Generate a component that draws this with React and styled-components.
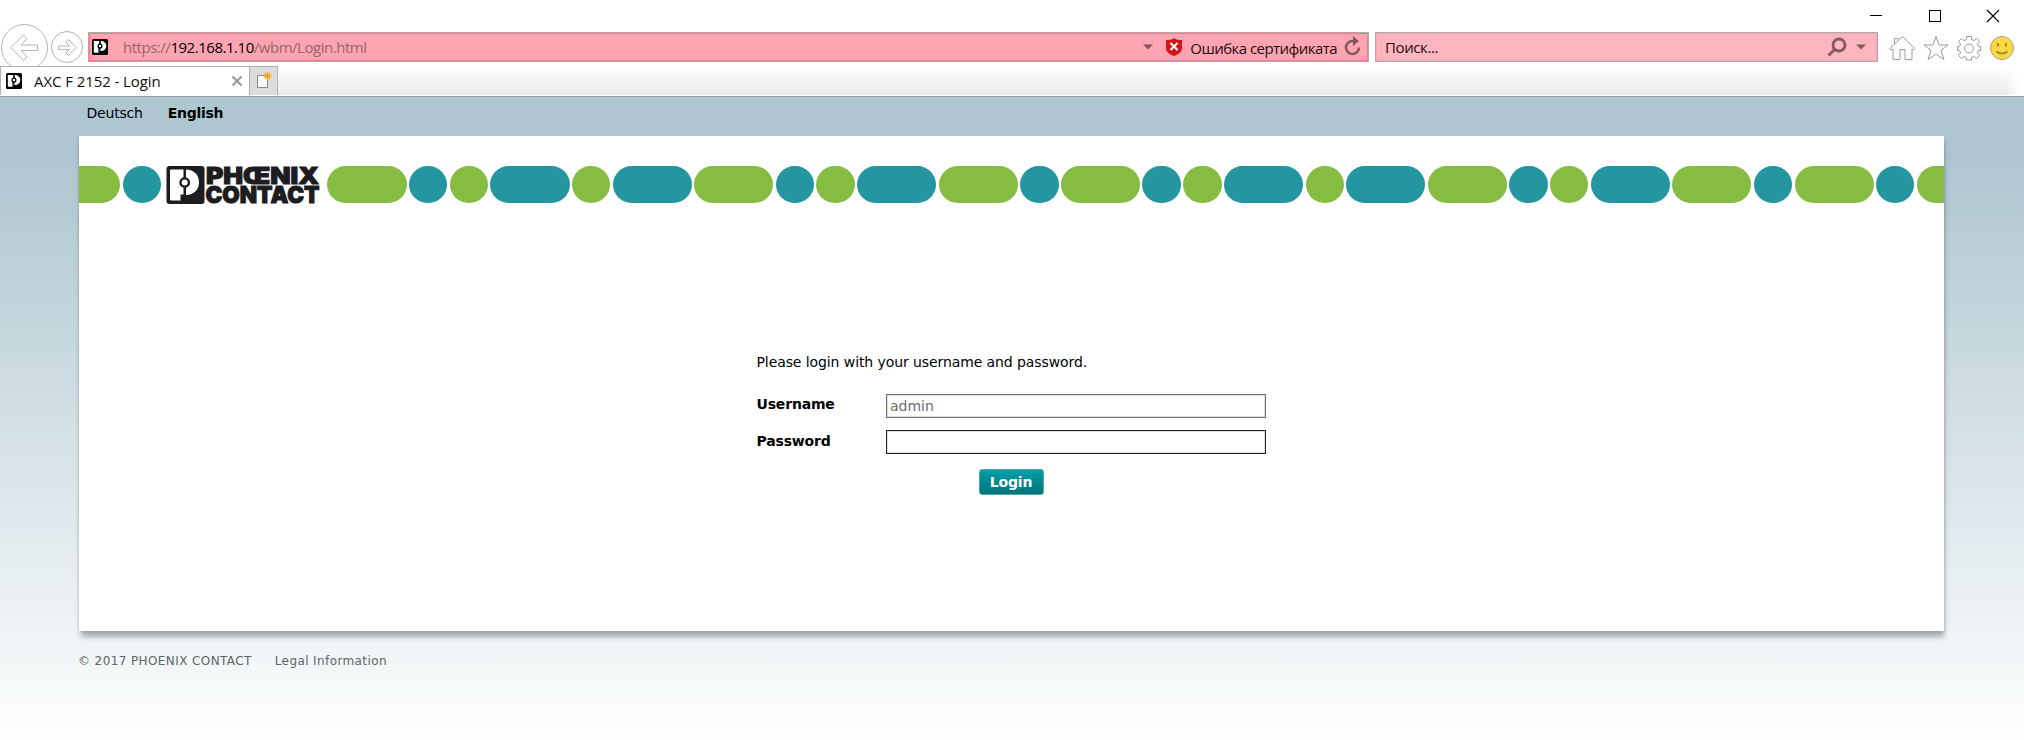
import React from "react";
import styled, { createGlobalStyle } from "styled-components";

const Global = createGlobalStyle`
  * { box-sizing: border-box; }
  body { margin: 0; background: #fff; overflow: hidden; }
`;
const uiFont = `"Open Sans", "Noto Sans", sans-serif`;
const pageFont = `"DejaVu Sans", "Liberation Sans", sans-serif`;

const Screen = styled.div`
  width: 2024px; height: 740px; display: flex; flex-direction: column;
`;
const TitleBar = styled.div`
  height: 32px; display: flex; justify-content: flex-end; align-items: flex-start;
  padding: 9px 24px 0 0; gap: 44.5px;
`;
const NavBar = styled.div`
  height: 34px; display: flex; align-items: flex-start;
`;
const NavButtons = styled.div`
  width: 88px; height: 34px; flex: none; display: flex; margin-top: -8px;
  svg { display: block; }
`;
const AddressBar = styled.div`
  width: 1281px; height: 30px; flex: none; display: flex; align-items: center;
  background: #ffa5b1; border: 1px solid #b0a8aa; box-shadow: inset 0 0 0 1px #ff7685;
  padding-left: 3px;
`;
const Url = styled.div`
  margin-left: 15px; flex: 1; font: 15px/20px ${uiFont}; color: #92666c;
  letter-spacing: -0.47px; white-space: nowrap;
  b { font-weight: 400; color: #000; }
`;
const CertText = styled.div`
  font: 15px/20px ${uiFont}; color: #1c0c0e; margin: 1px 7px 0 8px; white-space: nowrap;
  letter-spacing: -0.55px;
`;
const SearchBar = styled.div`
  width: 503px; height: 30px; flex: none; display: flex; align-items: center; margin-left: 6px;
  background: #ffb5c0; border: 1px solid #b0a8aa; box-shadow: inset 0 0 0 1px #ffa5b1;
  padding: 0 11px 0 9px; font: 15px/20px ${uiFont}; color: #1c0c0e; letter-spacing: -0.4px;
  span { flex: 1; }
`;
const Tools = styled.div`
  display: flex; gap: 7px; margin: 3px 0 0 11px;
  svg { display: block; }
`;
const TabStrip = styled.div`
  height: 31px; flex: none; display: flex; align-items: flex-start;
  border-bottom: 1px solid #9b9fa1;
`;
const StripShade = styled.div`
  flex: 1; height: 29px; margin-right: 3px;
  background: linear-gradient(#fff, #ebebeb);
  mask-image: linear-gradient(to right, #000 calc(100% - 16px), transparent);
`;
const Tab = styled.div`
  width: 250px; height: 29px; background: #fff; border: 1px solid #b0b0b0; border-bottom: 0;
  display: flex; align-items: center; padding: 0 6px 0 5px;
  font: 15px/20px ${uiFont}; color: #111; letter-spacing: -0.08px;
  span { flex: 1; margin-left: 12px; }
`;
const NewTab = styled.div`
  width: 28px; height: 29px; background: #dcdcdc; border: 1px solid #b0b0b0; border-left: 0; border-bottom: 0;
  display: flex; justify-content: center; padding-top: 5px;
`;
const Page = styled.div`
  flex: 1; padding: 0 80px 0 79px;
  background: linear-gradient(#aec6d0 0, #aec6d0 60px, #fcfdfd 635px);
  font-family: ${pageFont};
`;
const Languages = styled.div`
  height: 39px; padding: 7px 0 0 7.5px; display: flex; gap: 25px; font-size: 14px; line-height: 18px; color: #000;
`;
const Lang = styled.span`
  font-weight: ${(p) => (p.$active ? 700 : 400)};
  letter-spacing: ${(p) => (p.$active ? "-0.3px" : "-0.2px")};
`;
const Panel = styled.div`
  height: 495px; background: #fff; padding-top: 30px;
  box-shadow: 1px 7px 5px -1px rgba(85, 92, 97, 0.45), 0 0 3px rgba(80, 100, 110, 0.3);
  clip-path: inset(0 -6px -12px -4px);
`;
const Band = styled.div`
  height: 38px; display: flex; overflow: hidden;
`;
const Bead = styled.i`
  flex: none; height: 37px; border-radius: 18.5px; margin-right: 2.4px;
  width: ${(p) => (p.$long ? 79.14 : 38.37)}px;
  background: ${(p) => (p.$teal ? "#2396a0" : "#87bc42")};
  margin-left: ${(p) => p.$offset || 0}px;
`;
const LogoSvg = styled.svg`
  flex: none; display: block; margin: 0 6px 0 3px; overflow: visible;
`;
const Form = styled.div`
  width: 510px; margin: 149px 0 0 677.5px; font-size: 14px; line-height: 18px; color: #000;
`;
const Hint = styled.div`
  letter-spacing: -0.09px; white-space: nowrap; margin-bottom: 23px;
`;
const Field = styled.label`
  display: flex; height: 24px; margin-bottom: 12px;
`;
const FieldName = styled.b`
  width: 129.5px; letter-spacing: -0.18px; padding-top: ${(p) => p.$drop}px;
`;
const Input = styled.div`
  width: 380px; height: 24px; background: #fff; padding: 2px 3px; color: #6d6d6d;
  border: 1px solid ${(p) => (p.$dark ? "#222" : "#6f6f72")};
  box-shadow: inset 0 0 0 1px #dedede;
`;
const Login = styled.button`
  display: block; width: 65px; height: 26px; margin: 15px 0 0 222px; padding: 0; border: 1px solid #4fa9ae;
  border-radius: 3px; background: linear-gradient(#009fa8, #00747a); color: #fff;
  font: 700 14px/18px ${pageFont}; letter-spacing: -0.2px;
`;
const Footer = styled.div`
  margin: 21px 0 0 -1px; display: flex; gap: 23px; font-size: 12px; line-height: 18px; color: #5f6467;
  letter-spacing: 0.4px;
`;

const Fav = () => (
  <svg width="16" height="16" viewBox="0 0 16 16">
    <rect width="16" height="16" rx="1.5" fill="#000" />
    <path d="M1.800 2H7.500V13.800H2.500Q1.800 13.800 1.800 13z" fill="#fff" />
    <path d="M8.500 2C12 2 14.300 4 14.300 7S12 12 8.500 12z" fill="#fff" />
    <path d="M8 2v5M7 9v6" stroke="#000" strokeWidth="1.200" />
    <circle cx="8" cy="7" r="1.900" fill="#fff" stroke="#000" strokeWidth="1.300" />
  </svg>
);

const Logo = () => (
  <LogoSvg width="155" height="39" viewBox="0 0 155 39">
    <rect x="0.500" y="0" width="38" height="38" rx="3" fill="#1d1c20" />
    <path d="M5 3.500H17.500V28.500H14.500V34.500H5.500Q4 34.500 4 33V4.500Q4 3.500 5 3.500z" fill="#fff" />
    <path d="M20 3.500C28 3.500 33 9 33 16.300S28 29 20 29z" fill="#fff" />
    <circle cx="18.700" cy="16.500" r="4.200" fill="#fff" stroke="#1d1c20" strokeWidth="2.400" />
    <g fill="#1d1c20" stroke="#1d1c20" strokeWidth="1" fontFamily="Inter, 'Open Sans', sans-serif" fontWeight="900" fontSize="23">
      <text x="40" y="17.500" textLength="113" lengthAdjust="spacingAndGlyphs">PHŒNIX</text>
      <text x="39.500" y="37.300" textLength="114" lengthAdjust="spacingAndGlyphs">CONTACT</text>
    </g>
  </LogoSvg>
);

const Caret = () => (
  <svg width="10" height="6" viewBox="0 0 10 6"><path d="M0 .5h10L5 5.500z" fill="#85585e" /></svg>
);

const ShieldSvg = styled.svg`
  margin-left: 13px;
`;
const ReloadSvg = styled.svg`
  margin: -2px 7px 0 0;
`;
const SearchSvg = styled.svg`
  margin-right: 9px;
`;

// Upper case is a long bead, lower case a round one; g is green, t is teal.
const beads = "GtgTgTGtgTGtGtgTgTGtgTGtGtG".split("");

export default function App() {
  return (
    <Screen>
      <Global />
      <TitleBar>
        <svg width="14" height="14"><path d="M1 6.500h12" stroke="#000" /></svg>
        <svg width="14" height="14"><rect x="1.500" y="1.500" width="11" height="11" fill="none" stroke="#000" /></svg>
        <svg width="14" height="14"><path d="M1 1l12 12M13 1L1 13" stroke="#000" strokeWidth="1.100" /></svg>
      </TitleBar>
      <NavBar>
        <NavButtons>
          <svg width="88" height="42" viewBox="0 0 88 42" fill="none" stroke="#b3b3b3">
            <circle cx="24.500" cy="23.500" r="23" />
            <circle cx="67" cy="23" r="15.500" />
            <path d="M11 23.500L23.500 11l3.500 3.500-6 6.500H37.500v5.500H21l6 6.500-3.500 3.500z" />
            <path d="M76 23.500L68.500 15.500l-2.500 2.500 3.500 4H58.500v3.500h11L66 29l2.500 2.500z" />
          </svg>
        </NavButtons>
        <AddressBar>
          <Fav />
          <Url>https://<b>192.168.1.10</b>/wbm/Login.html</Url>
          <Caret />
          <ShieldSvg width="16" height="18" viewBox="0 0 16 18">
            <path d="M8 0c2 1.700 4.500 2.200 8 2v8.500c0 3.500-4 6-8 7.500-4-1.500-8-4-8-7.500V2c3.500.2 6-.3 8-2z" fill="#d3161b" />
            <path d="M4.500 5l7 7M11.500 5l-7 7" stroke="#fff" strokeWidth="2" />
          </ShieldSvg>
          <CertText>Ошибка сертификата</CertText>
          <ReloadSvg width="17" height="20" viewBox="0 0 17 20">
            <path d="M10.500 5H8.500a6.500 6.500 0 1 0 6.500 6.500" fill="none" stroke="#85585e" strokeWidth="2.600" />
            <path d="M9 0l6 5-6 5z" fill="#85585e" />
          </ReloadSvg>
        </AddressBar>
        <SearchBar>
          <span>Поиск...</span>
          <SearchSvg width="20" height="20" viewBox="0 0 20 20">
            <circle cx="12" cy="8" r="6" fill="none" stroke="#85585e" strokeWidth="2.800" />
            <path d="M8 12l-6.500 6.500" stroke="#85585e" strokeWidth="2.800" />
          </SearchSvg>
          <Caret />
        </SearchBar>
        <Tools>
          <svg width="27" height="26" viewBox="0 0 27 26" fill="none" stroke="#9c9c9c"><path d="M1 13.500L13.500 1.500 26 13.500l-1.500 1.500-1.500-1V24.500h-7V14.500h-5v10h-7V14l-2 1zM5.500 9V3.500h3.500V5.500" /></svg>
          <svg width="26" height="26" viewBox="0 0 26 26" fill="none" stroke="#9c9c9c"><path d="M13 1.500l3 8.500h9l-7 5.500 3 9-8-5.500-8 5.500 3-9L1 10h9z" /></svg>
          <svg width="26" height="26" viewBox="0 0 26 26" fill="none" stroke="#9c9c9c"><path d="M10.500 1.500h5v3l2.500 1 2.500-2 3 3-2 2.500 1 2.500h2v4h-2l-1 2.500 2 2.500-3 3-2.500-2-2.500 1v2.500h-5V22.500L8 21.500l-2.500 2-3-3 2-2.500-1-2.500h-2v-4h2l1-2.500-2-2.500 3-3 2.500 2 2.500-1z" /><circle cx="13" cy="13.500" r="4.500" /></svg>
          <svg width="26" height="26" viewBox="0 0 26 26"><circle cx="13" cy="13" r="11.500" fill="#ffd83f" stroke="#a39f92" /><path d="M9 8v3.500M17 8v3.500M7.500 16.500q5.500 4 11 0" fill="none" stroke="#94833a" strokeWidth="1.700" /></svg>
        </Tools>
      </NavBar>
      <TabStrip>
        <Tab><Fav /><span>AXC F 2152 - Login</span>
          <svg width="12" height="12"><path d="M1.500 1.500l9 9M10.500 1.500l-9 9" stroke="#999" strokeWidth="2" /></svg>
        </Tab>
        <NewTab>
          <svg width="16" height="18" viewBox="0 0 16 18"><rect x="1.500" y="3.500" width="10" height="12" fill="#fafafa" stroke="#8b8b8b" /><path d="M11.500 0v8M7.500 4h8M8.700 1.200l5.600 5.600M14.300 1.200L8.700 6.800" stroke="#f2a516" strokeWidth="1.300" /></svg>
        </NewTab>
        <StripShade />
      </TabStrip>
      <Page>
        <Languages><Lang>Deutsch</Lang><Lang $active>English</Lang></Languages>
        <Panel>
          <Band>
            <Bead $long $offset={-37.9} />
            <Bead $teal />
            <Logo />
            {beads.map((b, i) => (
              <Bead key={i} $long={b === "T" || b === "G"} $teal={b.toLowerCase() === "t"} />
            ))}
          </Band>
          <Form>
            <Hint>Please login with your username and password.</Hint>
            <Field><FieldName $drop={1}>Username</FieldName><Input>admin</Input></Field>
            <Field><FieldName $drop={2}>Password</FieldName><Input $dark /></Field>
            <Login>Login</Login>
          </Form>
        </Panel>
        <Footer><span>© 2017 PHOENIX CONTACT</span><span>Legal Information</span></Footer>
      </Page>
    </Screen>
  );
}
